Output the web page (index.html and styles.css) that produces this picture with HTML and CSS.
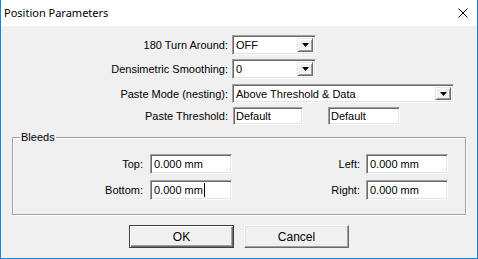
FILE: index.html
```html
<!DOCTYPE html>
<html>
<head>
<meta charset="utf-8">
<link rel="stylesheet" href="styles.css">
</head>
<body>
<div class="window">
  <div class="titlebar">
    <span class="title">Position Parameters</span>
    <svg class="close" width="10" height="10" viewBox="0 0 10 10"><path d="M0.5 0.5 L9.5 9.5 M9.5 0.5 L0.5 9.5" stroke="#000" stroke-width="1" fill="none"/></svg>
  </div>
  <div class="client">
    <div class="form">
      <div class="row r1">
        <span class="lbl">180 Turn Around:</span>
        <div class="combo small"><span class="val">OFF</span><span class="dd"><svg width="7" height="4" viewBox="0 0 7 4"><polygon points="0,0 7,0 3.5,4" fill="#000"/></svg></span></div>
      </div>
      <div class="row r2">
        <span class="lbl">Densimetric Smoothing:</span>
        <div class="combo small"><span class="val">0</span><span class="dd"><svg width="7" height="4" viewBox="0 0 7 4"><polygon points="0,0 7,0 3.5,4" fill="#000"/></svg></span></div>
      </div>
      <div class="row r3">
        <span class="lbl">Paste Mode (nesting):</span>
        <div class="combo wide"><span class="val">Above Threshold &amp; Data</span><span class="dd"><svg width="7" height="4" viewBox="0 0 7 4"><polygon points="0,0 7,0 3.5,4" fill="#000"/></svg></span></div>
      </div>
      <div class="row r4">
        <span class="lbl">Paste Threshold:</span>
        <div class="field thr">Default</div>
        <div class="field thr thr2">Default</div>
      </div>
    </div>
    <div class="group">
      <span class="legend">Bleeds</span>
      <div class="grid">
        <span class="glbl l1">Top:</span>
        <div class="field gf">0.000 mm</div>
        <span class="glbl l2">Left:</span>
        <div class="field gf">0.000 mm</div>
        <span class="glbl l1">Bottom:</span>
        <div class="field gf">0.000 mm<span class="caret"></span></div>
        <span class="glbl l2">Right:</span>
        <div class="field gf">0.000 mm</div>
      </div>
    </div>
    <div class="buttons">
      <div class="btn default">OK</div>
      <div class="btn">Cancel</div>
    </div>
  </div>
</div>
</body>
</html>
```
FILE: styles.css
```css
html, body {
  margin: 0;
  padding: 0;
  background: #f0f0f0;
}
.window {
  width: 478px;
  height: 259px;
  box-sizing: border-box;
  border: 1px solid #1883d7;
  border-top: none;
  background: #f0f0f0;
  display: flex;
  flex-direction: column;
  font-family: "Liberation Sans", Arial, sans-serif;
  font-size: 11px;
  color: #000;
}
.titlebar {
  height: 26px;
  flex: none;
  background: #fff;
  display: flex;
  align-items: center;
  justify-content: space-between;
  padding: 0 9px 0 3px;
}
.title {
  font-family: "Noto Sans", "Open Sans", sans-serif;
  font-size: 11px;
  position: relative;
  top: -1px;
}
.close {
  display: block;
  position: relative;
  top: 0px;
}
.client {
  flex: 1;
  padding-top: 9px;
}
.row {
  display: flex;
  align-items: center;
}
.r1 { height: 20px; }
.r2 { height: 20px; margin-top: 4px; }
.r3 { height: 19px; margin-top: 5px; }
.r4 { height: 18px; margin-top: 4px; }
.lbl {
  width: 227px;
  text-align: right;
  margin-right: 4px;
  white-space: nowrap;
}
.combo {
  height: 100%;
  box-sizing: border-box;
  background: #fff;
  border: 1px solid;
  border-color: #a0a0a0 #fff #fff #a0a0a0;
  box-shadow: inset 1px 1px 0 #696969, inset -1px -1px 0 #e3e3e3;
  display: flex;
  align-items: center;
  padding: 2px 2px 2px 3px;
}
.combo.small { width: 84px; }
.combo.wide { width: 222px; }
.val {
  flex: 1;
  white-space: nowrap;
}
.dd {
  width: 16px;
  height: 100%;
  box-sizing: border-box;
  background: #f0f0f0;
  border: 1px solid;
  border-color: #e3e3e3 #696969 #696969 #e3e3e3;
  box-shadow: inset 1px 1px 0 #fff, inset -1px -1px 0 #a0a0a0;
  display: flex;
  align-items: center;
  justify-content: center;
}
.dd svg { display: block; }
.field {
  box-sizing: border-box;
  background: #fff;
  border: 1px solid;
  border-color: #a0a0a0 #fff #fff #a0a0a0;
  box-shadow: inset 1px 1px 0 #696969, inset -1px -1px 0 #e3e3e3;
  display: flex;
  align-items: center;
  padding-left: 2px;
  white-space: nowrap;
}
.thr {
  width: 70px;
  height: 18px;
  margin-left: 1px;
}
.thr2 { margin-left: 25px; width: 72px; }
.group {
  position: relative;
  margin: 12px 0 0 11px;
  width: 454px;
  height: 78px;
  box-sizing: border-box;
  border: 1px solid #a0a0a0;
  box-shadow: 1px 1px 0 #fff, inset 1px 1px 0 #fff;
  padding-top: 16px;
}
.legend {
  position: absolute;
  top: -7px;
  left: 7px;
  padding: 0 1px;
  background: #f0f0f0;
  line-height: 13px;
}
.grid {
  display: grid;
  grid-template-columns: 137px 82px 134px 82px;
  grid-auto-rows: 20px;
  row-gap: 6px;
}
.glbl {
  display: flex;
  align-items: center;
  justify-content: flex-end;
}
.l1 { padding-right: 7px; }
.l2 { padding-right: 6px; }
.gf {
  height: 20px;
  padding-left: 3px;
}
.caret {
  display: inline-block;
  width: 1px;
  height: 14px;
  background: #000;
  margin-left: 1px;
}
.buttons {
  display: flex;
  justify-content: center;
  gap: 10px;
  margin-top: 10px;
}
.btn {
  width: 105px;
  height: 23px;
  box-sizing: border-box;
  display: flex;
  align-items: center;
  justify-content: center;
  background: #f0f0f0;
  border: 1px solid;
  border-color: #fff #696969 #696969 #fff;
  box-shadow: inset -1px -1px 0 #a0a0a0, inset 1px 1px 0 #e3e3e3;
  font-size: 12px;
}
.btn.default {
  border: 1px solid #404040;
  box-shadow: inset 1px 1px 0 #fff, inset -1px -1px 0 #696969, inset -2px -2px 0 #a0a0a0;
}
```
